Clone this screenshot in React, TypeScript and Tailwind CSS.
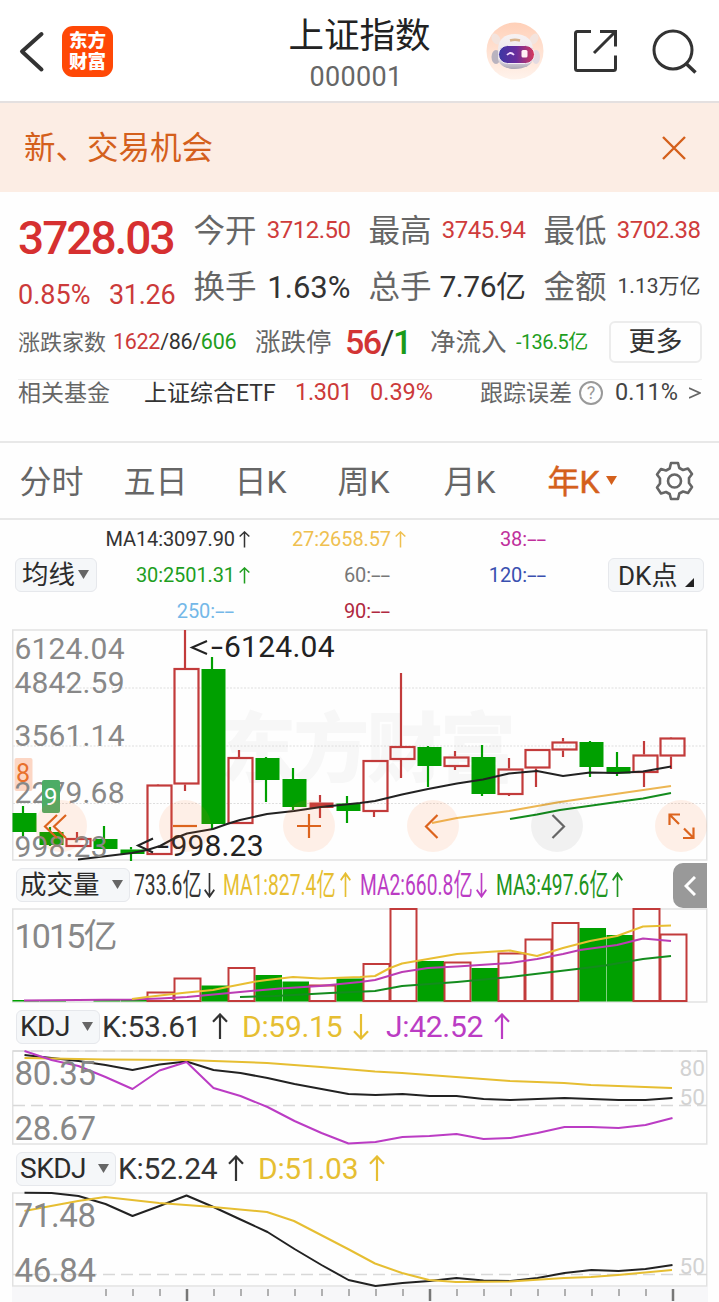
import type { ReactNode } from "react";
import clsx from "clsx";

const RED = "#c23b3b";
const GREEN = "#00a000";
const STEP = 27;
const FIRST_X = 24.5;

type Candle = { up: boolean; top: number; bottom: number; high: number; low: number; solid?: boolean };

// up, body top, body bottom, wick top, wick bottom
const candles: Candle[] = [
  { up: false, top: 813, bottom: 832, high: 806, low: 836 },
  { up: false, top: 832, bottom: 845, high: 827, low: 846 },
  { up: true, top: 838, bottom: 847, high: 832, low: 847 },
  { up: false, top: 839, bottom: 849, high: 826, low: 849 },
  { up: false, top: 849.5, bottom: 854, high: 847, low: 861 },
  { up: true, top: 784.5, bottom: 855, high: 785, low: 855 },
  { up: true, top: 668, bottom: 784.5, high: 630, low: 791 },
  { up: false, top: 669, bottom: 824, high: 657, low: 830 },
  { up: true, top: 757, bottom: 824, high: 750, low: 824 },
  { up: false, top: 758, bottom: 780, high: 757, low: 802 },
  { up: false, top: 779, bottom: 807, high: 768, low: 810 },
  { up: true, top: 802.5, bottom: 808, high: 795, low: 818, solid: true },
  { up: false, top: 803.5, bottom: 811, high: 796, low: 823 },
  { up: true, top: 760, bottom: 812, high: 760, low: 817 },
  { up: true, top: 746, bottom: 760, high: 673, low: 778 },
  { up: false, top: 747, bottom: 766, high: 746, low: 787 },
  { up: true, top: 756.5, bottom: 767, high: 751, low: 770 },
  { up: false, top: 757, bottom: 794, high: 745, low: 796 },
  { up: true, top: 768.5, bottom: 795, high: 758, low: 796 },
  { up: true, top: 749, bottom: 768.5, high: 749, low: 787 },
  { up: true, top: 741.5, bottom: 750.5, high: 738, low: 757 },
  { up: false, top: 742, bottom: 767, high: 741, low: 777 },
  { up: false, top: 767, bottom: 773.5, high: 752, low: 776 },
  { up: true, top: 754.5, bottom: 773, high: 741, low: 787 },
  { up: true, top: 737.5, bottom: 756.5, high: 738, low: 769 },
];

const volumeTops = [
  1000, 1000, 1000, 1000, 999, 991.5, 977.5, 985.5, 967, 975, 981.5, 984.5, 978.5,
  963, 908, 961, 961.5, 968, 952.5, 938.5, 922, 928, 935, 908, 933.5,
];

// one value per year
const kLine = [1055, 1058, 1061, 1065, 1070, 1064.5, 1061.5, 1070, 1073, 1078, 1084, 1089, 1094, 1095, 1094, 1096, 1096, 1099, 1100, 1099, 1098, 1099, 1100, 1100, 1098];
const jLine = [1051, 1060, 1066, 1077, 1089, 1070.5, 1062, 1088, 1096, 1107, 1121, 1133, 1143.5, 1142, 1137, 1136, 1134, 1139, 1138, 1133, 1127, 1127, 1128, 1125, 1118];
const skLine = [1192.7, 1193, 1196, 1204, 1216, 1206, 1195.5, 1207, 1219.5, 1232, 1249, 1265, 1280, 1286, 1283, 1281, 1278, 1280.5, 1281, 1278, 1273, 1270, 1271, 1269, 1265];

const toPoints = (ys: number[]) => ys.map((y, i) => `${FIRST_X + i * STEP},${y}`).join(" ");

function Line({ points, color }: { points: string; color: string }) {
  return <polyline points={points} fill="none" stroke={color} strokeWidth={2} strokeLinejoin="round" />;
}

type LabelProps = { x: number; y: number; w: number; size: number; fill?: string; stretch?: boolean; children: string };

function Label({ x, y, w, size, fill = "#888888", stretch, children }: LabelProps) {
  return (
    <text x={x} y={y} fontSize={size} fill={fill} textLength={w} lengthAdjust={stretch ? "spacingAndGlyphs" : "spacing"}>
      {children}
    </text>
  );
}

function Arrow({ down, className, thick = 1.6 }: { down?: boolean; className?: string; thick?: number }) {
  return (
    <svg viewBox="0 0 16 28" preserveAspectRatio="none" fill="none" stroke="currentColor" strokeWidth={thick} className={clsx("shrink-0", down && "rotate-180", className)}>
      <path d="M8 27V2M1 9l7-7.5L15 9" />
    </svg>
  );
}

function Caret({ className }: { className?: string }) {
  return (
    <svg viewBox="0 0 11 9" className={clsx("h-[9px] w-[11px] shrink-0", className)}>
      <path d="M0 0h11L5.5 9z" fill="currentColor" />
    </svg>
  );
}

function Chip({ children, className }: { children: ReactNode; className?: string }) {
  return (
    <button className={clsx("flex h-[34px] shrink-0 items-center rounded-md border border-[#e6e8ec] bg-[#f5f7f9] leading-none whitespace-nowrap text-[#2b2b2b]", className)}>
      {children}
    </button>
  );
}

function Robot() {
  return (
    <svg viewBox="0 0 58 58" className="h-[58px] w-[58px]">
      <defs>
        <linearGradient id="halo" x1="0" y1="0" x2="0" y2="1">
          <stop offset="0" stopColor="#ffd0b8" />
          <stop offset="1" stopColor="#fff3ec" />
        </linearGradient>
        <linearGradient id="visor" x1="0" y1="0" x2="1" y2="0">
          <stop offset="0" stopColor="#3a38a4" />
          <stop offset="0.5" stopColor="#6a2c9c" />
          <stop offset="1" stopColor="#d83a5c" />
        </linearGradient>
        <linearGradient id="shell" x1="0" y1="0" x2="0" y2="1">
          <stop offset="0" stopColor="#f7f2f2" />
          <stop offset="0.7" stopColor="#e9e4ea" />
          <stop offset="1" stopColor="#a9a4b4" />
        </linearGradient>
      </defs>
      <circle cx="29" cy="29" r="28.5" fill="url(#halo)" />
      <ellipse cx="10" cy="17" rx="4" ry="6" fill="#f3e4de" transform="rotate(-30 10 17)" />
      <ellipse cx="48" cy="17" rx="4" ry="6" fill="#f3e4de" transform="rotate(30 48 17)" />
      <ellipse cx="10" cy="35" rx="4.5" ry="7" fill="#b9b3bf" />
      <ellipse cx="50" cy="35" rx="4" ry="7" fill="#e3dbe2" />
      <path d="M12 28c0-11 7-16 17-16s18 5 18 16v8c0 7-9 11-18 11s-17-4-17-11z" fill="url(#shell)" />
      <path d="M24 18.500q5-1.500 10 0" stroke="#d9b38c" strokeWidth="2.500" fill="none" />
      <rect x="12.500" y="23.500" width="36" height="18" rx="9" fill="url(#visor)" stroke="#f4edf4" />
      <path d="M21 33q3.500-4 7 0" stroke="#f6dcff" strokeWidth="1.800" fill="none" />
      <rect x="35.500" y="28" width="6" height="7.500" rx="1.500" fill="#fff0f5" />
    </svg>
  );
}

function Header() {
  return (
    <header className="flex h-[103px] items-start border-b-2 border-[#e4e0e0] bg-white">
      <svg viewBox="0 0 26 42" className="mt-[31px] ml-[19px] h-[42px] w-[26px]" fill="none" stroke="#333" strokeWidth="4" strokeLinecap="round" strokeLinejoin="round">
        <path d="M22.500 3L3 20.500L22.500 38.500" />
      </svg>
      <div className="mt-[26px] ml-[17px] flex h-[51px] w-[51px] flex-col items-center justify-center rounded-[11px] bg-[#ff4806] text-[18.5px] leading-[21px] font-black text-white">
        <span>东方</span>
        <span>财富</span>
      </div>
      <div className="ml-[136px] flex w-[214px] flex-col items-center">
        <h1 className="mt-[16px] ml-[7px] text-[35.5px] leading-[40px] whitespace-nowrap text-[#222]">上证指数</h1>
        <span className="mt-[5px] text-[27px] leading-[32px] tracking-[0.3px] text-[#666]">000001</span>
      </div>
      <div className="mt-[22px] ml-[23px]">
        <Robot />
      </div>
      <svg viewBox="0 0 46 46" className="mt-[28px] ml-[29px] h-[46px] w-[46px]" fill="none" stroke="#333" strokeWidth="3">
        <path d="M18 3.500H4.500Q2.500 3.500 2.500 5.500V40.500Q2.500 42.500 4.500 42.500H40.500Q42.500 42.500 42.500 40.500V27.500M27 3.500H42.500V18.500M42 4L21 25" />
      </svg>
      <svg viewBox="0 0 46 46" className="mt-[29px] ml-[33px] h-[46px] w-[46px]" fill="none" stroke="#333" strokeWidth="3">
        <circle cx="21" cy="21" r="19" />
        <path d="M33.500 34L43.500 43.500" strokeWidth="3.500" />
      </svg>
    </header>
  );
}

function Banner() {
  return (
    <div className="flex h-[89px] items-center justify-between bg-[#fcede4] pr-[33px] pl-[24px] text-[#d4601c]">
      <span className="pt-[3px] text-[31.5px] leading-none">新、交易机会</span>
      <svg viewBox="0 0 24 24" className="h-6 w-6" fill="none" stroke="currentColor" strokeWidth="2.400">
        <path d="M1 1l22 22M23 1L1 23" />
      </svg>
    </div>
  );
}

const stats = [
  { label: "今开", value: "3712.50", style: "text-[24px] tracking-[-0.5px] text-[#cf3c3c]" },
  { label: "最高", value: "3745.94", style: "text-[24px] tracking-[-0.5px] text-[#cf3c3c]" },
  { label: "最低", value: "3702.38", style: "text-[24px] tracking-[-0.5px] text-[#cf3c3c]" },
  { label: "换手", value: "1.63%", style: "pt-[2px] text-[31px] text-[#333]" },
  { label: "总手", value: "7.76亿", style: "pt-[2px] text-[30px] tracking-[-0.5px] text-[#333]" },
  { label: "金额", value: "1.13万亿", style: "pt-[1px] text-[21px] text-[#444]" },
];

function Quote() {
  return (
    <section className="h-[249px] pl-[18px] text-[#666]">
      <div className="flex h-[123px] pt-[10px]">
        <div className="w-[175.5px]">
          <div className="mt-[12px] text-[46px] leading-[48px] font-medium tracking-[-2px] text-[#d63030]">3728.03</div>
          <div className="mt-[17px] flex text-[27px] leading-[32px] text-[#cc3a3a]">
            <span className="w-[91px]">0.85%</span>
            <span className="tracking-[-0.3px]">31.26</span>
          </div>
        </div>
        <div className="grid grid-cols-[157px_157px_157px] grid-rows-[56px_56px] gap-x-[18px]">
          {stats.map((s) => (
            <div key={s.label} className="flex items-center justify-between leading-none whitespace-nowrap">
              <span className="pt-[4px] text-[31.5px]">{s.label}</span>
              <span className={s.style}>{s.value}</span>
            </div>
          ))}
        </div>
      </div>

      <div className="mt-[6px] grid h-[42px] grid-cols-[95px_142px_90px_85px_86px_93px_93px] items-center leading-none whitespace-nowrap">
        <span className="pt-[2px] text-[22px]">涨跌家数</span>
        <span className="text-[21.5px] tracking-[-0.3px] text-[#333]">
          <span className="text-[#cc3a3a]">1622</span>/86/<span className="text-[#1f9e1f]">606</span>
        </span>
        <span className="pt-[2px] text-[25.5px]">涨跌停</span>
        <span className="text-[34px] tracking-[-1.6px] text-[#333]">
          <span className="font-medium text-[#d23434]">56</span>/<span className="font-medium text-[#1a9a1a]">1</span>
        </span>
        <span className="pt-[2px] text-[25.500px]">净流入</span>
        <span className="text-[20px] tracking-[-0.6px] text-[#1f9e1f]">-136.5亿</span>
        <button className="h-[42px] rounded-md border-2 border-[#ececec] text-[27px] leading-none text-[#333]">更多</button>
      </div>

      <div className="mt-[16px] mr-[17px] grid h-[26px] grid-cols-[126px_151px_75px_110px_99px_36px_74px_14px] items-center border-t border-[#efefef] leading-none whitespace-nowrap">
        <span className="pt-px text-[23px]">相关基金</span>
        <span className="pt-px text-[23px] text-[#333]">上证综合ETF</span>
        <span className="text-[23.5px] tracking-[-0.3px] text-[#cc3a3a]">1.301</span>
        <span className="text-[23.5px] text-[#cc3a3a]">0.39%</span>
        <span className="pt-px text-[23px]">跟踪误差</span>
        <span className="flex h-[24px] w-[24px] items-center justify-center rounded-full border-2 border-[#999] text-[18px] text-[#999]">?</span>
        <span className="text-[23.5px] text-[#444]">0.11%</span>
        <svg viewBox="0 0 12 12" className="h-3 w-3" fill="none" stroke="#666" strokeWidth="1.600">
          <path d="M0 1l11 5L0 11" />
        </svg>
      </div>
    </section>
  );
}

function Tabs() {
  return (
    <nav className="grid h-[79px] grid-cols-[104px_111px_103px_106px_104px_106px_40px] items-center border-y-2 border-[#e8e8e8] pl-[19.5px] text-[32px] leading-none whitespace-nowrap text-[#666]">
      <span className="pt-[3px]">分时</span>
      <span className="pt-[3px]">五日</span>
      <span className="pt-[3px]">日K</span>
      <span className="pt-[3px]">周K</span>
      <span className="pt-[3px]">月K</span>
      <span className="flex items-center text-[#d4601c]">
        <span className="pt-[3px] [-webkit-text-stroke:0.5px_#d4601c]">年K</span>
        <Caret className="ml-[6px]" />
      </span>
      <svg viewBox="0 0 40 40" className="ml-[1px] h-10 w-10" fill="none" stroke="#666" strokeWidth="2.600" strokeLinejoin="round">
        <path d="M16 2h7l1.300 5l3.700 2l5-1.500l4 5.500l-3 4v5l3 4l-4 6l-5-1.500l-3.700 2L23 38h-7l-1.300-5l-3.700-2l-5 1.500l-4-6l3-4v-5l-3-4l4-5.500l5 1.500l3.700-2z" />
        <circle cx="19.500" cy="20" r="6.500" />
      </svg>
    </nav>
  );
}

const averages = [
  { text: "MA14:3097.90", color: "text-[#333]", up: true },
  { text: "27:2658.57", color: "text-[#efc050]", up: true },
  { text: "38:", color: "text-[#c0309c]" },
  { text: "30:2501.31", color: "text-[#1f9e1f]", up: true },
  { text: "60:", color: "text-[#777]" },
  { text: "120:", color: "text-[#3a50b0]" },
  { text: "250:", color: "text-[#74b8e8]" },
  { text: "90:", color: "text-[#b02840]" },
];

function Averages() {
  return (
    <section className="flex h-[109px] items-center pl-[15px]">
      <Chip className="w-[82px] pl-[6px] text-[26.5px]">
        <span className="pt-[2px]">均线</span>
        <Caret className="ml-[3px] text-[#666]" />
      </Chip>
      <div className="grid w-[465px] grid-cols-[153px_156px_156px] grid-rows-[36px_36px_36px] pt-px text-[20px] leading-none tracking-[-0.1px]">
        {averages.map((a) => (
          <div key={a.text} className={clsx("flex items-center justify-end", a.color)}>
            {a.text}
            {a.up ? (
              <Arrow className="ml-[4px] h-[17px] w-[11px]" thick={2.2} />
            ) : (
              <span className="mr-[15px] w-[20px]">
                <span className="inline-block origin-left scale-x-[1.75]">--</span>
              </span>
            )}
          </div>
        ))}
      </div>
      <Chip className="ml-[46px] w-[96px] pl-[9px] text-[26px]">
        <span className="pt-[2px]">DK点</span>
        <svg viewBox="0 0 9 9" className="mt-[15px] ml-[8px] h-[9px] w-[9px]">
          <path d="M9 0v9H0z" fill="#222" />
        </svg>
      </Chip>
    </section>
  );
}

function ChartFrame({ y, h, children }: { y: number; h: number; children: ReactNode }) {
  return (
    <svg viewBox={`12 ${y} 696 ${h}`} width={696} height={h} className="ml-[12px] block shrink-0 overflow-visible">
      <rect x={12.75} y={y + 1} width={694} height={h - 2} fill="none" stroke="#e2e2e2" strokeWidth={1.5} />
      {children}
    </svg>
  );
}

const tools = [
  { name: "first", d: "M22 15l-12 11.500l12 11.500M31 15l-12 11.500l12 11.500", style: "bg-[#ff6a1a]/10 text-[#dc641e]" },
  { name: "zoom out", d: "M14 26h24", style: "bg-[#ff6a1a]/10 text-[#dc641e]" },
  { name: "zoom in", d: "M14 26h24M26 14v24", style: "bg-[#ff6a1a]/10 text-[#dc641e]" },
  { name: "back", d: "M30.500 15L19 26.500L30.500 38", style: "bg-[#ff6a1a]/10 text-[#dc641e]" },
  { name: "forward", d: "M21.500 15L33 26.500L21.500 38", style: "bg-black/5 text-[#666]" },
  { name: "expand", d: "M14.500 25V14.500H25M15 15l9 9M38.500 27.500V38H28M38 37.500l-9-9", style: "bg-[#ff6a1a]/10 text-[#dc641e]" },
];

function PriceChart() {
  return (
    <div className="relative">
      <ChartFrame y={629} h={232}>
        <text x={220} y={776} fontSize={76} fontWeight={900} fill="#f7f7f7" textLength={296}>
          东方财富
        </text>
        {[688, 746, 803.5].map((y) => (
          <line key={y} x1={13} x2={707} y1={y} y2={y} stroke="#dedede" strokeDasharray="2 1.500" />
        ))}
        {candles.map((c, i) => {
          const x = FIRST_X - 1 + i * STEP;
          const color = c.up ? RED : GREEN;
          const hollow = c.up && !c.solid;
          return (
            <g key={i} stroke={color} strokeWidth={2.2}>
              <line x1={x - 0.5} x2={x - 0.5} y1={c.high} y2={c.top} />
              <line x1={x - 0.5} x2={x - 0.5} y1={c.bottom} y2={c.low} />
              {hollow ? (
                <rect x={x - 11} y={c.top + 1} width={24} height={c.bottom - c.top - 2} fill="none" />
              ) : (
                <rect x={x - 11} y={c.top} width={24} height={c.bottom - c.top} fill={color} stroke="none" />
              )}
            </g>
          );
        })}
        <Line color="#222" points="78,859.500 132,853 147,850 160,846 173,839 187,833.500 213,829 227,824 240,820 267,814 294,811 321,807 360,803 375,801 402,794.500 428,789 457,783.500 483,779.500 509,773.500 537,771 563,776 590,772.500 617,773 643,771.500 671,766.500" />
        <Line color="#ecb653" points="432,823 457,818 509,811 560,802 671,786" />
        <Line color="#148c1e" points="510,819 537,814.500 560,810 617,802 643,798.500 671,793" />
        <Label x={14.500} y={659} w={110} size={30}>6124.04</Label>
        <Label x={14.500} y={693} w={110} size={30}>4842.59</Label>
        <Label x={14.500} y={746} w={110} size={30}>3561.14</Label>
        <rect x={14.500} y={758} width={18} height={33} rx={2} fill="#fcd6c4" />
        <Label x={16} y={782} w={15} size={25} fill="#e8702c">8</Label>
        <Label x={14.500} y={803} w={110} size={30}>2279.68</Label>
        <rect x={42} y={780} width={18} height={33} rx={2} fill="#4cac66" />
        <Label x={44} y={804.500} w={14} size={24} fill="#ffffff">9</Label>
        <Label x={14.500} y={857} w={93} size={30}>998.23</Label>
        <g fill="none" stroke="#222" strokeWidth={2}>
          <path d="M207 641l-15 6.500l15 6.500" />
          <path d="M153 838.500l-15 7l15 7" />
        </g>
        <Label x={211} y={657} w={12} size={30} fill="#222" stretch>-</Label>
        <Label x={224} y={657} w={110.500} size={30} fill="#222">6124.04</Label>
        <Label x={157} y={855.500} w={12} size={30} fill="#222" stretch>-</Label>
        <Label x={170.500} y={855.500} w={93} size={30} fill="#222">998.23</Label>
      </ChartFrame>
      {/* floating controls over the candles */}
      <div className="absolute top-[171px] left-[35px] flex w-[672px] justify-between">
        {tools.map((t) => (
          <button key={t.name} aria-label={t.name} className={clsx("h-[52px] w-[52px] rounded-full", t.style)}>
            <svg viewBox="0 0 52 52" fill="none" stroke="currentColor" strokeWidth="2.200">
              <path d={t.d} />
            </svg>
          </button>
        ))}
      </div>
    </div>
  );
}

function VolumeItem({ text, down, className, arrow }: { text: string; down?: boolean; className: string; arrow: string }) {
  return (
    <div className={clsx("flex items-center overflow-visible", className)}>
      <span className={clsx("origin-left scale-x-[0.642] pt-px text-[30px] leading-none whitespace-nowrap", arrow)}>{text}</span>
      <Arrow down={down} className="h-[26px] w-[11px]" thick={2.4} />
    </div>
  );
}

function VolumeChart() {
  return (
    <>
      <div className="relative flex h-[47px] items-center pl-[16px]">
        <Chip className="w-[114px] pl-[3px] text-[26.5px]">
          <span className="pt-[2px]">成交量</span>
          <Caret className="ml-[12px] text-[#666]" />
        </Chip>
        <VolumeItem text="733.6亿" down className="ml-[4px] w-[89px] text-[#333]" arrow="w-[70px]" />
        <VolumeItem text="MA1:827.4亿" className="w-[136.500px] text-[#e6be32]" arrow="w-[117px]" />
        <VolumeItem text="MA2:660.8亿" down className="w-[136px] text-[#bb3cc4]" arrow="w-[116px]" />
        <VolumeItem text="MA3:497.6亿" className="w-[136px] text-[#1f9420]" arrow="w-[116px]" />
        <button className="absolute top-[2px] right-[12px] flex h-[45px] w-[34px] items-center justify-center rounded-l-[10px] bg-[#999]">
          <svg viewBox="0 0 12 20" className="h-5 w-3" fill="none" stroke="#fff" strokeWidth="3">
            <path d="M11 1L2 10l9 9" />
          </svg>
        </button>
      </div>
      <ChartFrame y={908} h={95}>
        <Label x={14.500} y={948} w={103} size={34}>1015亿</Label>
        {volumeTops.map((top, i) => {
          const x = FIRST_X - 13 + i * STEP;
          return candles[i].up ? (
            <rect key={i} x={x + 1} y={top + 1} width={26} height={1000 - top} fill="none" stroke={RED} strokeWidth={2} />
          ) : (
            <rect key={i} x={x + 1} y={top} width={26.500} height={1001.500 - top} fill={GREEN} />
          );
        })}
        <Line color="#148c1e" points="240,997 275,996 330,993 375,991 402,986 457,982 510,977 577,969 605,965.500 643,959 671,956" />
        <Line color="#bb3cb4" points="24,1000.500 132,999.500 160,998.500 187,997 240,992 280,988.500 320,986 360,982 375,980 402,972 428,968 457,966.500 510,963 537,959 563,954 580,950 617,945 643,938.500 671,941" />
        <Line color="#e8be32" points="132,999 147,997 173,994 187,992.500 213,990 230,986.500 253,982 267,980 293,977 320,978.500 360,977 375,976 390,968 402,963.500 428,959 457,954 510,950.500 537,956 563,948 590,941 617,936 643,926.500 671,925.500" />
      </ChartFrame>
    </>
  );
}

function Reading({ text, down, className }: { text: string; down?: boolean; className: string }) {
  return (
    <div className={clsx("flex items-center gap-[11px] text-[30px] leading-none tracking-[-0.3px] whitespace-nowrap", className)}>
      {text}
      <Arrow down={down} className="h-[27px] w-[16px]" thick={2.2} />
    </div>
  );
}

const rightDash = { stroke: "#d8d8d8", strokeDasharray: "12 6", strokeWidth: 1.5 };

export default function App() {
  return (
    <main className="h-[1302px] w-[719px] overflow-hidden bg-[#fefefe] font-['Roboto','Noto_Sans_CJK_SC',sans-serif]">
      <Header />
      <Banner />
      <Quote />
      <Tabs />
      <Averages />
      <PriceChart />
      <VolumeChart />

      <div className="flex h-[47px] items-center pl-[16px]">
        <Chip className="w-[84px] pl-[3px] text-[28px] tracking-[-0.5px]">
          KDJ
          <Caret className="mr-[6px] ml-auto text-[#666]" />
        </Chip>
        <Reading text="K:53.61" className="ml-[2px] w-[140px] text-[#333]" />
        <Reading text="D:59.15" down className="w-[144px] text-[#e6be32]" />
        <Reading text="J:42.52" className="text-[#bb3cc4]" />
      </div>
      <ChartFrame y={1050} h={95}>
        <line x1={13} x2={707} y1={1051} y2={1051} {...rightDash} />
        <line x1={13} x2={707} y1={1105.500} y2={1105.500} {...rightDash} />
        <Line color="#222" points={toPoints(kLine)} />
        <Line color="#e6be32" points="24.500,1058 105,1059.500 186,1060 267,1063 321,1067 375,1071.500 402,1073 456,1077 510,1081 564,1083 591,1085 672,1088" />
        <Line color="#bb3cc4" points={toPoints(jLine)} />
        <Label x={14.500} y={1085} w={81.500} size={33}>80.35</Label>
        <Label x={14.500} y={1140} w={81.500} size={33}>28.67</Label>
        <Label x={679.500} y={1076} w={25.500} size={22.500} fill="#d2d2d2" stretch>80</Label>
        <Label x={679.500} y={1104.500} w={25.500} size={22.500} fill="#d2d2d2" stretch>50</Label>
      </ChartFrame>

      <div className="flex h-[47px] items-center pl-[16px]">
        <Chip className="w-[100px] pl-[3px] text-[28px] tracking-[-0.5px]">
          SKDJ
          <Caret className="mr-[6px] ml-auto text-[#666]" />
        </Chip>
        <Reading text="K:52.24" className="ml-[2px] w-[140px] text-[#333]" />
        <Reading text="D:51.03" className="text-[#e6be32]" />
      </div>
      <ChartFrame y={1192} h={95}>
        <line x1={13} x2={707} y1={1274.500} y2={1274.500} {...rightDash} />
        <Line color="#222" points={toPoints(skLine)} />
        <Line color="#e6be32" points="24.500,1211 51,1206 78,1201 105,1197 159,1203 213,1207 267,1212 294,1221 321,1235 348,1249 375,1263.500 402,1273 429,1280 456,1282 510,1281.500 564,1278 591,1277 618,1275 672,1270" />
        <Label x={14.500} y={1227} w={81.500} size={33}>71.48</Label>
        <Label x={14.500} y={1282} w={81.500} size={33}>46.84</Label>
        <Label x={679.500} y={1273.500} w={25.500} size={22.500} fill="#d2d2d2" stretch>50</Label>
      </ChartFrame>
      <svg viewBox="12 1287 696 15" width={696} height={15} className="ml-[12px] block bg-[#f7f7f9]">
        {Array.from({ length: 22 }, (_, i) => {
          const major = i % 9 === 3;
          const x = 106 + i * STEP;
          return <line key={i} x1={x} x2={x} y1={1289} y2={major ? 1301 : 1296} stroke={major ? "#777" : "#999"} strokeWidth={major ? 2.5 : 1.5} />;
        })}
      </svg>
    </main>
  );
}
